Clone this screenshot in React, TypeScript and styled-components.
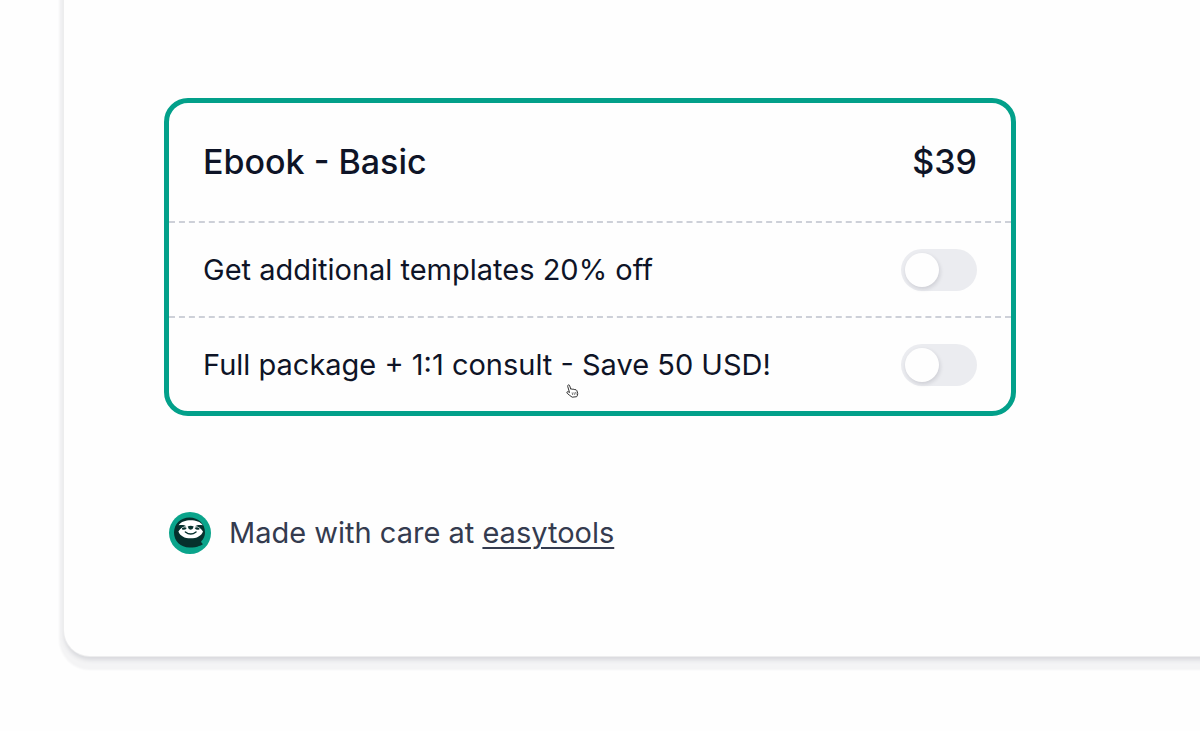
import React from 'react';
import styled, { createGlobalStyle } from 'styled-components';

const GlobalStyle = createGlobalStyle`
  *, *::before, *::after { box-sizing: border-box; }
  body {
    margin: 0;
    background: #fefefe;
    color: #0e1427;
    font-family: Inter, "Liberation Sans", sans-serif;
    overflow-x: hidden;
  }
`;

const Page = styled.div`
  padding: 0 0 72px 64px;
  overflow: hidden;
`;

const Panel = styled.main`
  margin: -20px -40px 0 0;
  padding: 118px 224px 102px 100px;
  background: #fefefe;
  border-radius: 0 0 0 26px;
  box-shadow: 0 0 0 1px #ededee, 0 4px 4px #d8d9dd, 0 9px 2px 5px #f4f4f5;
`;

const Card = styled.section`
  position: relative;
  border: 5px solid #02a08a;
  border-radius: 24px;
`;

const Row = styled.div<{ $head?: boolean }>`
  display: flex;
  align-items: center;
  justify-content: space-between;
  height: ${(p) => (p.$head ? 118 : 93)}px;
  padding: 0 34px;
  & + & { border-top: 2px dashed #cdd0d8; height: 95px; }
`;

const Title = styled.h1`
  margin: 0;
  font-size: 34px;
  line-height: 40px;
  font-weight: 500;
`;

const Price = styled.span`
  font-size: 34px;
  line-height: 40px;
  font-weight: 500;
`;

const Label = styled.label`
  font-size: 29px;
  line-height: 36px;
`;

const Switch = styled.input`
  appearance: none;
  flex: none;
  display: flex;
  align-items: center;
  width: 76px;
  height: 42px;
  margin: 0;
  padding: 0 4px;
  border-radius: 21px;
  background: #ebecf0;
  cursor: pointer;
  &::before {
    content: "";
    width: 34px;
    height: 34px;
    border-radius: 50%;
    background: #fefefe;
    box-shadow: 1px 2px 4px rgba(20, 24, 40, 0.14);
  }
  &:checked { justify-content: flex-end; background: #02a08a; }
`;

const Pointer = styled.svg`
  position: absolute;
  left: 397px;
  bottom: 13px;
  width: 13px;
  height: 14px;
  pointer-events: none;
`;

const Footer = styled.footer`
  display: flex;
  align-items: center;
  gap: 18px;
  margin-top: 96px;
  padding-left: 5px;
  color: #343b4f;
  font-size: 29px;
  line-height: 42px;
`;

const Credit = styled.p`
  margin: 0;
`;

const BrandLink = styled.a`
  &, &:visited { color: #343b4f; }
  text-decoration: underline #343b4f 2px;
  text-underline-offset: 4px;
`;

const Logo = () => (
  <svg width="42" height="42" viewBox="0 0 42 42" aria-hidden="true">
    <circle cx="21" cy="21" r="21" fill="#0aa48b" />
    <path d="M20.500 5.500C11.500 5.500 5 12 5 20.500S11.500 35.500 20.500 35.500C24.500 35.500 28 35.200 30 34C31.500 33.700 33 32.900 34 31.900C32.800 31.500 32.100 30.500 32.200 29.300C34.700 26.900 36 24 36 20.500C36 12 29.500 5.500 20.500 5.500Z" fill="#06302d" />
    <path d="M21.700 8.200C16.500 8.200 12 9.600 9.600 13.300C12.500 12.600 15.500 12.800 17.300 14.200C14.500 14.200 11.500 16 9.400 19.400C10.900 23.800 15.600 26.300 21.700 26.300S32.500 23.800 34 19.400C31.900 16 28.900 14.200 26.100 14.200C27.900 12.800 30.900 12.600 33.800 13.300C31.400 9.600 26.900 8.200 21.700 8.200Z" fill="#fff" />
    <path d="M18.700 14.400Q21.700 13.200 24.700 14.400Q24.400 16.800 21.700 17.700Q19 16.800 18.700 14.400Z" fill="#06302d" />
    <path d="M13 16.200Q15.500 14.600 17.800 15.900Q16.300 18.300 13 17.600ZM30.400 16.200Q27.900 14.600 25.600 15.900Q27.100 18.300 30.400 17.600Z" fill="#06302d" />
    <path d="M16.400 20Q21.700 24.200 27 20" fill="none" stroke="#06302d" strokeWidth="1.500" strokeLinecap="round" />
  </svg>
);

const App: React.FC = () => (
  <Page>
    <GlobalStyle />
    <Panel>
      <Card>
        <Row $head>
          <Title>Ebook - Basic</Title>
          <Price>$39</Price>
        </Row>
        <Row>
          <Label htmlFor="templates">Get additional templates 20% off</Label>
          <Switch type="checkbox" role="switch" id="templates" />
        </Row>
        <Row>
          <Label htmlFor="package">Full package + 1:1 consult - Save 50 USD!</Label>
          <Switch type="checkbox" role="switch" id="package" />
        </Row>
        <Pointer viewBox="0 0 13 14" aria-hidden="true">
          <path d="M3.500 8.500L1.700 2.400Q1.500 1.100 2.500 .9Q3.400 .8 3.700 1.800L4.800 5.200Q6 4.500 6.900 5.400Q8 4.800 8.800 5.700Q10.300 5.300 10.900 6.700L11.700 9.400Q11.800 11.200 10.700 12.700L6.200 13.200Q3.800 11.600 1.200 9.300Q.5 8.400 1.200 7.800Q2.200 7.400 3.500 8.500Z" fill="#fff" stroke="#333" strokeWidth="1" strokeLinejoin="round" />
          <path d="M6.100 8.500L6.700 11M7.900 8.300L8.500 10.800M9.600 8L10.200 10.500" stroke="#555" strokeWidth=".8" />
        </Pointer>
      </Card>
      <Footer>
        <Logo />
        <Credit>
          Made with care at <BrandLink href="#">easytools</BrandLink>
        </Credit>
      </Footer>
    </Panel>
  </Page>
);

export default App;
